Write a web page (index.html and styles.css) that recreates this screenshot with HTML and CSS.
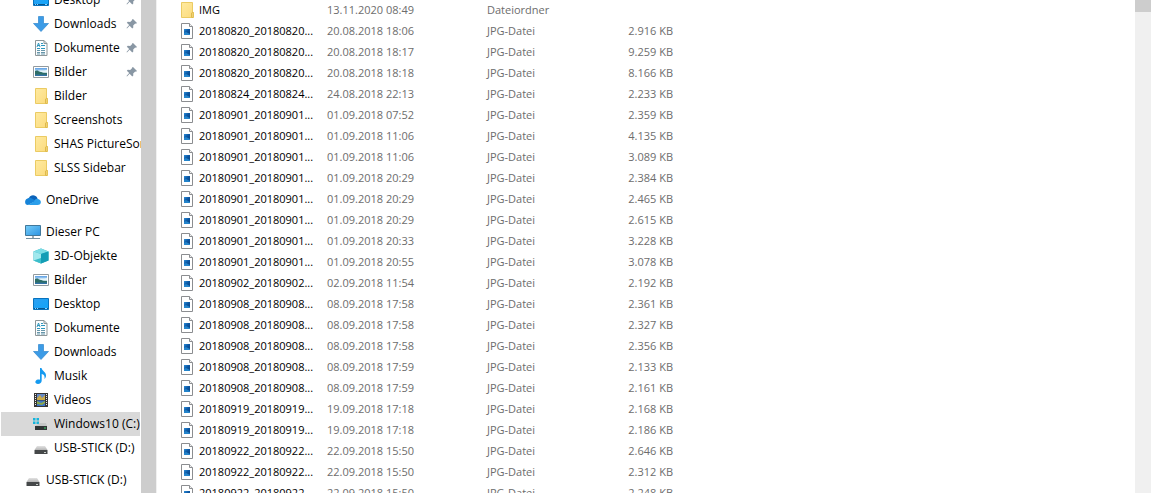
FILE: index.html
```html
<!DOCTYPE html>
<html lang="de">
<head>
<meta charset="utf-8">
<title>Explorer</title>
<link rel="stylesheet" href="styles.css">
</head>
<body>
<svg class="sprite" aria-hidden="true">
  <defs>
    <linearGradient id="g-folder" x2="1" y2="1"><stop stop-color="#ffeaa0"/><stop offset="1" stop-color="#fbdb7d"/></linearGradient>
    <linearGradient id="g-screen" x2="1" y2="1"><stop stop-color="#2d9ff0"/><stop offset="1" stop-color="#0fa5fb"/></linearGradient>
    <linearGradient id="g-pc" x2="1" y2="1"><stop stop-color="#77cdf8"/><stop offset="1" stop-color="#2b94e3"/></linearGradient>
    <linearGradient id="g-photo" x2="0" y2="1"><stop stop-color="#5b9ee5"/><stop offset=".5" stop-color="#d6edf8"/><stop offset=".65" stop-color="#3c7c86"/><stop offset="1" stop-color="#2f6fae"/></linearGradient>
    <linearGradient id="g-jpg" x2="1" y2="1"><stop stop-color="#2f8fd8"/><stop offset=".45" stop-color="#0b57a4"/><stop offset="1" stop-color="#0a3f7c"/></linearGradient>
    <linearGradient id="g-drive" x2="0" y2="1"><stop stop-color="#e2e2e2"/><stop offset="1" stop-color="#b5b5b5"/></linearGradient>
  </defs>
  <symbol id="folder" viewBox="0 0 16 16"><path d="M2.500.500h11v9.500l1 .500v5h-12z" fill="url(#g-folder)" stroke="#ebcb63"/><path d="M12.500 15.500v-4.500l1.500-1v5.500z" fill="#ffe89a" stroke="#dfba4c"/></symbol>
  <symbol id="desktop" viewBox="0 0 16 16"><path d="M.500 2.500h15v11H.500z" fill="url(#g-screen)" stroke="#0872bd"/><path d="M1 12.500h14" stroke="#07568f"/><path d="M2 12.500h1m1 0h1m7 0h2" stroke="#8bd3ff"/></symbol>
  <symbol id="download" viewBox="0 0 16 16"><path d="M5.500.500h5v7h5L8 15.500.500 7.500h5z" fill="#3c9be6" stroke="#2f86cf" stroke-width=".700"/></symbol>
  <symbol id="document" viewBox="0 0 16 16"><path d="M2.500.500h8.500l3 3v12H2.500z" fill="#fbfdfe" stroke="#8d9699"/><path d="M11 .500v3h3" fill="none" stroke="#8d9699"/><path d="M4 7l1.500-4L7 7M4.500 5.500h2M8 3.500h2M8 5.500h4M4 8.500h3m1 0h4" fill="none" stroke="#2d96bd"/><path d="M4 10.500h3m1 0h4m-8 2h3m1 0h4m-8 1.500h3m1 0h4" stroke="#6796aa"/></symbol>
  <symbol id="picture" viewBox="0 0 16 16"><path d="M.500 2.500h15v11H.500z" fill="#fff" stroke="#929a9f"/><path d="M2 4h12v8H2z" fill="url(#g-photo)"/><path d="M2 7c3-2 5 2 12 2v1.500H2z" fill="#2d6d67"/><path d="M5 7c3-1 5 0 9-1v2.500C10 9 8 7.500 5 7z" fill="#e5f4f8"/></symbol>
  <symbol id="cloud" viewBox="0 0 16 16"><path d="M4 6C5 3.500 8 2.500 10.500 4c1.200.700 1.900 1.800 2 3L9 11z" fill="#0b63ba"/><path d="M4 5.800C6 5.500 8 7 11 9l-8 4C-.500 13-.800 8 2 6.800z" fill="#1683d8"/><path d="M9 9.500c.800-2 2-3 4-2.500 3.800.600 4 6-.500 6H3z" fill="#2b9eea"/></symbol>
  <symbol id="pc" viewBox="0 0 16 16"><path d="M.500 1.500h15v10H.500z" fill="url(#g-pc)" stroke="#41789b"/><path d="M7 12h2v2H7z" fill="#9aabb5"/><path d="M1 14.500h14" stroke="#7390a0"/></symbol>
  <symbol id="cube" viewBox="0 0 16 16"><path d="M8 .500l7.500 3v9L8 15.500.500 12.500v-9z" fill="#27adc0"/><path d="M8 .500l7.500 3L8 6 .500 3.500z" fill="#7cdde5"/><path d="M.500 3.500L8 6v9.500L.500 12.500z" fill="#a1e8ed"/><path d="M8 6l7.500-2.500v9L8 15.500z" fill="#159db5"/><path d="M.500 12.500L8 10v5.500z" fill="#3bbdca"/></symbol>
  <symbol id="music" viewBox="0 0 16 16"><path d="M7 0h1.500c.500 3 5 4 4.500 8-.200 1.500-.800 2.300-1.500 3C12 8 11 6.500 8.700 6v6.500C8.700 14.500 7 16 5 16c-3.500 0-3.500-4 0-4.500.800-.100 1.500 0 2 .200z" fill="#159af0"/></symbol>
  <symbol id="video" viewBox="0 0 16 16"><path d="M1 1h14v14H1z" fill="#353535"/><path d="M4 2h8v6H4z" fill="#6589c6"/><path d="M4 8.500h8V14H4z" fill="#3c74ca"/><path d="M4 6l3-3 2 3 3-3v5H4z" fill="#c9a94a"/><path d="M4 9l4 2 4-2v2l-3 2-5-1z" fill="#8aa84c"/><path d="M2.500 2v12m11-12v12" stroke="#eee" stroke-dasharray="1 1"/></symbol>
  <symbol id="drive" viewBox="0 0 16 16"><path d="M4 6h8l2.500 4h-13z" fill="url(#g-drive)"/><path d="M1.500 10h13v4h-13z" fill="#454849"/><path d="M11 12.500h2" stroke="#c7cdc9"/></symbol>
  <symbol id="windrive" viewBox="0 0 16 16"><path d="M0 2h2.500v2.500H0zm3.500 0H6v2.500H3.500zM0 5.500h2.500V8H0zm3.500 0H6V8H3.500z" fill="#15b5dc"/><path d="M7 7h6l1 3H2l1.500-1z" fill="#c5c7c7"/><path d="M2 10h12v4H2z" fill="#303536"/><path d="M11 12h2" stroke="#39d568"/></symbol>
  <symbol id="pin" viewBox="0 0 12 12"><path d="M7 1l4 4-1 .700-.800-.200-2 2 .100 2-1 1-2.700-2.700L1 10.500l-.500-.500 2.700-3L.800 4.700l1-1 2.400.200 2-2L6 1.500z" fill="#8997a4"/></symbol>
  <symbol id="jpg" viewBox="0 0 12 16"><path d="M.500.500h8l3 3v12H.500z" fill="#fff" stroke="#8b8d90"/><path d="M8.500.500v3h3" fill="#f1f1f1" stroke="#8b8d90"/><path d="M3 6h6v6H3z" fill="url(#g-jpg)"/><path d="M3 10l2-1 4 2v1H3z" fill="#2484cb"/></symbol>
</svg>

<div class="explorer">
  <nav class="tree" aria-label="Navigationsbereich">
    <div class="group">
      <a class="item sub" href="#"><svg class="icon"><use href="#desktop"/></svg><span class="label">Desktop</span><svg class="pin"><use href="#pin"/></svg></a>
      <a class="item sub" href="#"><svg class="icon"><use href="#download"/></svg><span class="label">Downloads</span><svg class="pin"><use href="#pin"/></svg></a>
      <a class="item sub" href="#"><svg class="icon"><use href="#document"/></svg><span class="label">Dokumente</span><svg class="pin"><use href="#pin"/></svg></a>
      <a class="item sub" href="#"><svg class="icon"><use href="#picture"/></svg><span class="label">Bilder</span><svg class="pin"><use href="#pin"/></svg></a>
      <a class="item sub" href="#"><svg class="icon"><use href="#folder"/></svg><span class="label">Bilder</span></a>
      <a class="item sub" href="#"><svg class="icon"><use href="#folder"/></svg><span class="label">Screenshots</span></a>
      <a class="item sub" href="#"><svg class="icon"><use href="#folder"/></svg><span class="label">SHAS PictureSor</span></a>
      <a class="item sub" href="#"><svg class="icon"><use href="#folder"/></svg><span class="label">SLSS Sidebar</span></a>
    </div>
    <div class="group">
      <a class="item" href="#"><svg class="icon"><use href="#cloud"/></svg><span class="label">OneDrive</span></a>
    </div>
    <div class="group">
      <a class="item" href="#"><svg class="icon"><use href="#pc"/></svg><span class="label">Dieser PC</span></a>
      <a class="item sub" href="#"><svg class="icon"><use href="#cube"/></svg><span class="label">3D-Objekte</span></a>
      <a class="item sub" href="#"><svg class="icon"><use href="#picture"/></svg><span class="label">Bilder</span></a>
      <a class="item sub" href="#"><svg class="icon"><use href="#desktop"/></svg><span class="label">Desktop</span></a>
      <a class="item sub" href="#"><svg class="icon"><use href="#document"/></svg><span class="label">Dokumente</span></a>
      <a class="item sub" href="#"><svg class="icon"><use href="#download"/></svg><span class="label">Downloads</span></a>
      <a class="item sub" href="#"><svg class="icon"><use href="#music"/></svg><span class="label">Musik</span></a>
      <a class="item sub" href="#"><svg class="icon"><use href="#video"/></svg><span class="label">Videos</span></a>
      <a class="item sub selected" href="#" aria-current="true"><svg class="icon"><use href="#windrive"/></svg><span class="label">Windows10 (C:)</span></a>
      <a class="item sub" href="#"><svg class="icon"><use href="#drive"/></svg><span class="label">USB-STICK (D:)</span></a>
    </div>
    <div class="group">
      <a class="item" href="#"><svg class="icon"><use href="#drive"/></svg><span class="label">USB-STICK (D:)</span></a>
    </div>
  </nav>
  <div class="tree-scroll"></div>
  <main class="files">
    <table class="list">
      <colgroup><col class="c-name"><col class="c-date"><col class="c-type"><col class="c-size"></colgroup>
      <tbody>
        <tr><td><div class="name"><svg class="file folder"><use href="#folder"/></svg>IMG</div></td><td>13.11.2020 08:49</td><td>Dateiordner</td><td></td></tr>
        <tr><td><div class="name"><svg class="file"><use href="#jpg"/></svg>20180820_20180820...</div></td><td>20.08.2018 18:06</td><td>JPG-Datei</td><td>2.916 KB</td></tr>
        <tr><td><div class="name"><svg class="file"><use href="#jpg"/></svg>20180820_20180820...</div></td><td>20.08.2018 18:17</td><td>JPG-Datei</td><td>9.259 KB</td></tr>
        <tr><td><div class="name"><svg class="file"><use href="#jpg"/></svg>20180820_20180820...</div></td><td>20.08.2018 18:18</td><td>JPG-Datei</td><td>8.166 KB</td></tr>
        <tr><td><div class="name"><svg class="file"><use href="#jpg"/></svg>20180824_20180824...</div></td><td>24.08.2018 22:13</td><td>JPG-Datei</td><td>2.233 KB</td></tr>
        <tr><td><div class="name"><svg class="file"><use href="#jpg"/></svg>20180901_20180901...</div></td><td>01.09.2018 07:52</td><td>JPG-Datei</td><td>2.359 KB</td></tr>
        <tr><td><div class="name"><svg class="file"><use href="#jpg"/></svg>20180901_20180901...</div></td><td>01.09.2018 11:06</td><td>JPG-Datei</td><td>4.135 KB</td></tr>
        <tr><td><div class="name"><svg class="file"><use href="#jpg"/></svg>20180901_20180901...</div></td><td>01.09.2018 11:06</td><td>JPG-Datei</td><td>3.089 KB</td></tr>
        <tr><td><div class="name"><svg class="file"><use href="#jpg"/></svg>20180901_20180901...</div></td><td>01.09.2018 20:29</td><td>JPG-Datei</td><td>2.384 KB</td></tr>
        <tr><td><div class="name"><svg class="file"><use href="#jpg"/></svg>20180901_20180901...</div></td><td>01.09.2018 20:29</td><td>JPG-Datei</td><td>2.465 KB</td></tr>
        <tr><td><div class="name"><svg class="file"><use href="#jpg"/></svg>20180901_20180901...</div></td><td>01.09.2018 20:29</td><td>JPG-Datei</td><td>2.615 KB</td></tr>
        <tr><td><div class="name"><svg class="file"><use href="#jpg"/></svg>20180901_20180901...</div></td><td>01.09.2018 20:33</td><td>JPG-Datei</td><td>3.228 KB</td></tr>
        <tr><td><div class="name"><svg class="file"><use href="#jpg"/></svg>20180901_20180901...</div></td><td>01.09.2018 20:55</td><td>JPG-Datei</td><td>3.078 KB</td></tr>
        <tr><td><div class="name"><svg class="file"><use href="#jpg"/></svg>20180902_20180902...</div></td><td>02.09.2018 11:54</td><td>JPG-Datei</td><td>2.192 KB</td></tr>
        <tr><td><div class="name"><svg class="file"><use href="#jpg"/></svg>20180908_20180908...</div></td><td>08.09.2018 17:58</td><td>JPG-Datei</td><td>2.361 KB</td></tr>
        <tr><td><div class="name"><svg class="file"><use href="#jpg"/></svg>20180908_20180908...</div></td><td>08.09.2018 17:58</td><td>JPG-Datei</td><td>2.327 KB</td></tr>
        <tr><td><div class="name"><svg class="file"><use href="#jpg"/></svg>20180908_20180908...</div></td><td>08.09.2018 17:58</td><td>JPG-Datei</td><td>2.356 KB</td></tr>
        <tr><td><div class="name"><svg class="file"><use href="#jpg"/></svg>20180908_20180908...</div></td><td>08.09.2018 17:59</td><td>JPG-Datei</td><td>2.133 KB</td></tr>
        <tr><td><div class="name"><svg class="file"><use href="#jpg"/></svg>20180908_20180908...</div></td><td>08.09.2018 17:59</td><td>JPG-Datei</td><td>2.161 KB</td></tr>
        <tr><td><div class="name"><svg class="file"><use href="#jpg"/></svg>20180919_20180919...</div></td><td>19.09.2018 17:18</td><td>JPG-Datei</td><td>2.168 KB</td></tr>
        <tr><td><div class="name"><svg class="file"><use href="#jpg"/></svg>20180919_20180919...</div></td><td>19.09.2018 17:18</td><td>JPG-Datei</td><td>2.186 KB</td></tr>
        <tr><td><div class="name"><svg class="file"><use href="#jpg"/></svg>20180922_20180922...</div></td><td>22.09.2018 15:50</td><td>JPG-Datei</td><td>2.646 KB</td></tr>
        <tr><td><div class="name"><svg class="file"><use href="#jpg"/></svg>20180922_20180922...</div></td><td>22.09.2018 15:50</td><td>JPG-Datei</td><td>2.312 KB</td></tr>
        <tr><td><div class="name"><svg class="file"><use href="#jpg"/></svg>20180922_20180922...</div></td><td>22.09.2018 15:50</td><td>JPG-Datei</td><td>2.248 KB</td></tr>
      </tbody>
    </table>
  </main>
  <div class="list-scroll"><div class="thumb"></div></div>
</div>
</body>
</html>
```
FILE: styles.css
```css
* {
  box-sizing: border-box;
}

body {
  margin: 0;
  background: #fff;
  color: #000;
  font-family: "Open Sans", "Noto Sans", sans-serif;
  font-size: 12px;
}

.sprite {
  position: absolute;
  width: 0;
  height: 0;
}

.explorer {
  display: flex;
  height: 100vh;
  overflow: hidden;
}

.tree {
  flex: none;
  width: 141px;
  padding: 0 1px;
  overflow: hidden;
}

.group {
  margin-bottom: 8px;
}

.group:first-child {
  margin-top: -12px;
}

.item {
  display: flex;
  align-items: center;
  gap: 5px;
  height: 24px;
  padding-left: 24px;
  color: inherit;
  text-decoration: none;
  white-space: nowrap;
}

.sub {
  padding-left: 32px;
}

.selected {
  background: #d9d9d9;
}

.icon {
  flex: none;
  width: 16px;
  height: 16px;
}

.label {
  flex: 1;
  min-width: 0;
  line-height: 18px;
}

.pin {
  flex: none;
  width: 12px;
  height: 12px;
  margin-right: 2px;
}

.tree-scroll {
  flex: none;
  width: 16px;
  background: #cdcdcd;
  border-right: 1px solid #f0f0f0;
}

.files {
  flex: 1;
  min-width: 0;
  padding-left: 24px;
  overflow: hidden;
}

.list {
  width: 492px;
  table-layout: fixed;
  border-collapse: collapse;
  font-size: 11px;
  color: #6d6d6d;
}

.c-name {
  width: 146px;
}

.c-date {
  width: 160px;
}

.c-type {
  width: 100px;
}

.list td {
  height: 21px;
  padding: 0;
  line-height: 20px;
  vertical-align: top;
  white-space: nowrap;
}

.list td:last-child {
  text-align: right;
}

.name {
  display: flex;
  gap: 6px;
  color: #000;
}

.file {
  flex: none;
  width: 12px;
  height: 16px;
  margin-top: 2px;
}

.folder {
  width: 16px;
  margin-right: -2px;
  margin-left: -2px;
}

.list-scroll {
  flex: none;
  width: 16px;
  margin-right: 1px;
  background: #f0f0f0;
}

.thumb {
  height: 12px;
  background: #cdcdcd;
}
```
